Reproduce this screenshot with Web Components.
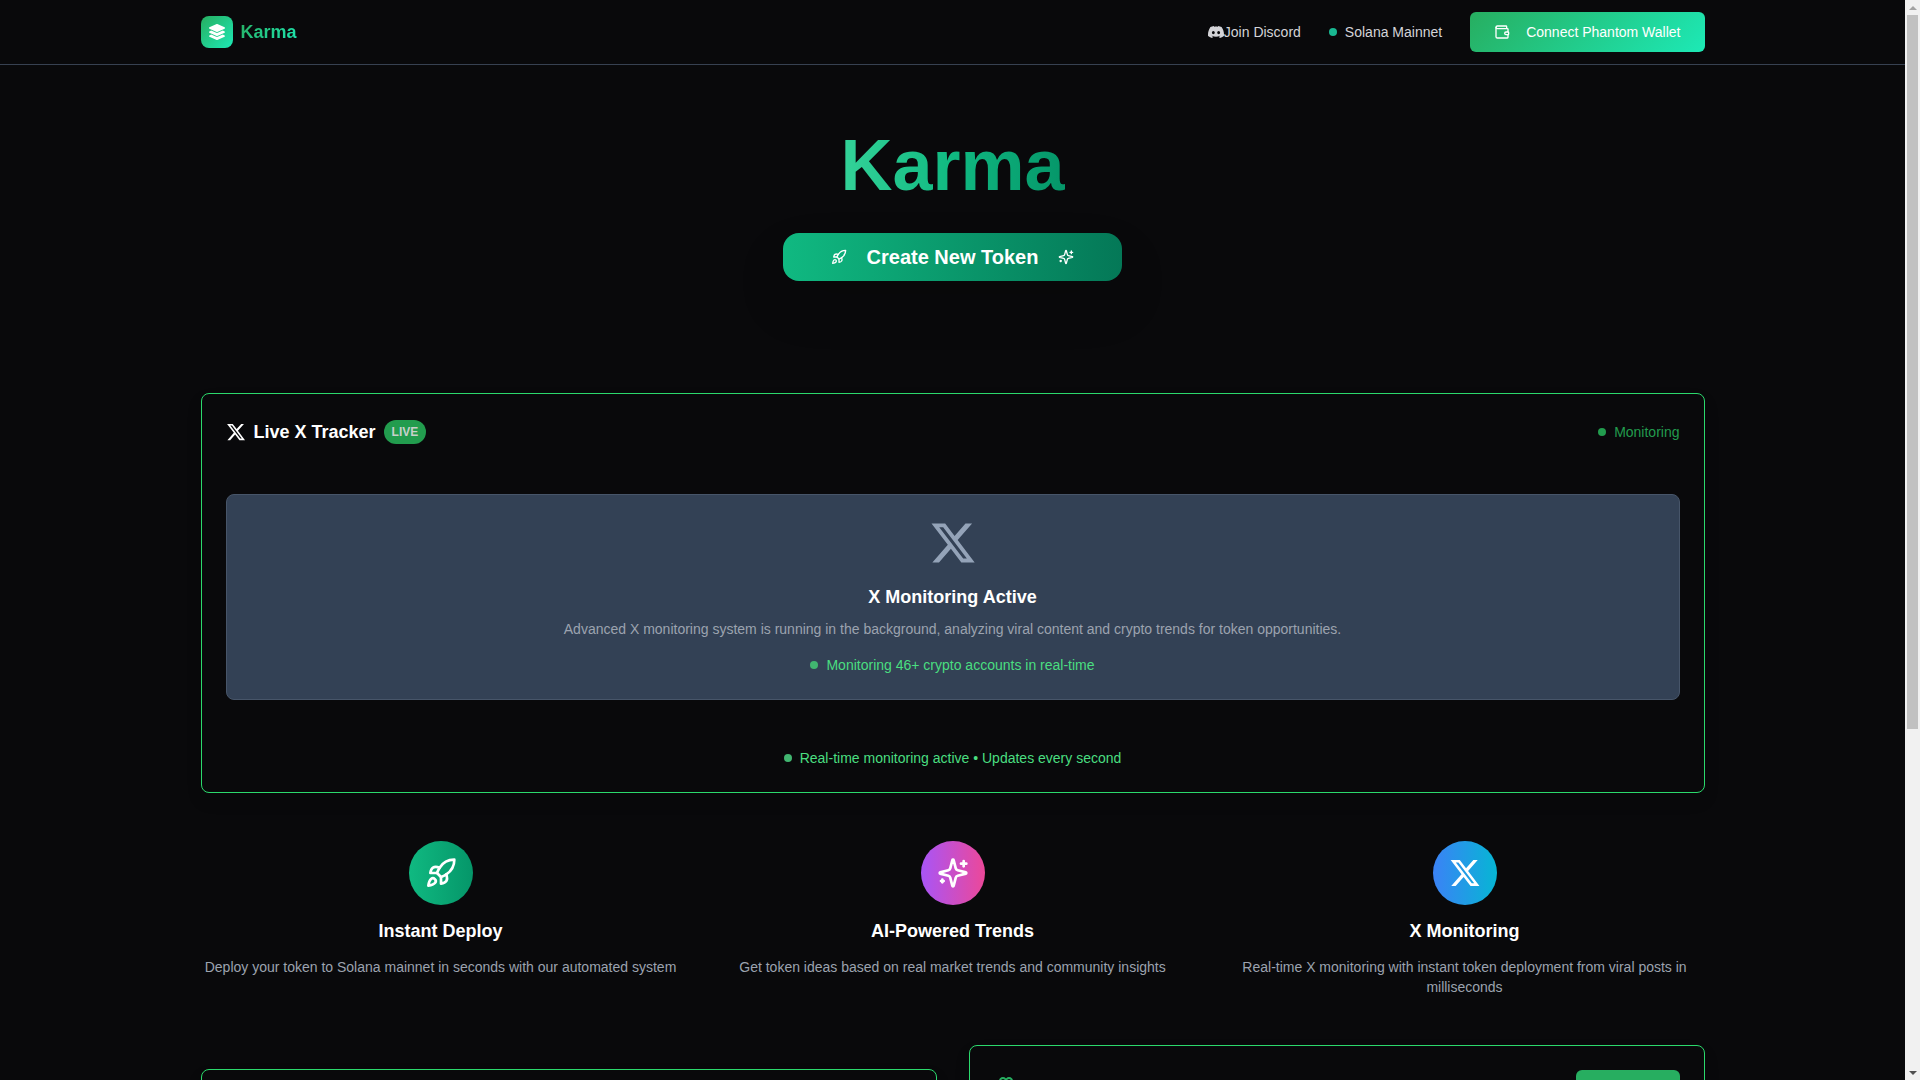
<!DOCTYPE html>
<html lang="en">
<head>
<meta charset="UTF-8">
<meta name="viewport" content="width=device-width, initial-scale=1.0">
<title>Karma</title>
<style>
  body {
    margin: 0;
    background: #09090b;
    color: #fff;
    font-family: "Liberation Sans", Arial, sans-serif;
    font-size: 14px;
    line-height: 20px;
  }
</style>
</head>
<body>
<karma-scroller>
  <karma-app></karma-app>
</karma-scroller>

<script>
// Icon.js
const stroked = (paths) => ({ viewBox: "0 0 24 24", stroke: true, paths });
const filled = (viewBox, path) => ({ viewBox, stroke: false, paths: [path] });

const ICONS = {
  layers: filled("0 0 512 512", "M12.41 148.02l232.94 105.67c6.8 3.09 14.49 3.09 21.29 0l232.94-105.67c16.55-7.51 16.55-32.52 0-40.03L266.65 2.31a25.607 25.607 0 0 0-21.29 0L12.41 107.98c-16.55 7.51-16.55 32.53 0 40.04zm487.18 88.28l-58.09-26.33-161.64 73.27c-7.56 3.43-15.59 5.17-23.86 5.17s-16.29-1.74-23.86-5.17L70.51 209.97l-58.1 26.33c-16.55 7.5-16.55 32.5 0 40l232.94 105.59c6.8 3.08 14.49 3.08 21.29 0L499.59 276.3c16.55-7.5 16.55-32.5 0-40zm0 127.8l-57.87-26.23-161.86 73.37c-7.56 3.43-15.59 5.17-23.86 5.17s-16.29-1.74-23.86-5.17L70.29 337.87 12.41 364.1c-16.55 7.5-16.55 32.5 0 40l232.94 105.59c6.8 3.08 14.49 3.08 21.29 0L499.59 404.1c16.55-7.5 16.55-32.5 0-40z"),
  discord: filled("0 0 24 24", "M20.317 4.3698a19.7913 19.7913 0 0 0-4.8851-1.5152.0741.0741 0 0 0-.0785.0371c-.211.3753-.4447.8648-.6083 1.2495-1.8447-.2762-3.68-.2762-5.4868 0-.1636-.3933-.4058-.8742-.6177-1.2495a.077.077 0 0 0-.0785-.037 19.7363 19.7363 0 0 0-4.8852 1.515.0699.0699 0 0 0-.0321.0277C.5334 9.0458-.319 13.5799.0992 18.0578a.0824.0824 0 0 0 .0312.0561c2.0528 1.5076 4.0413 2.4228 5.9929 3.0294a.0777.0777 0 0 0 .0842-.0276c.4616-.6304.8731-1.2952 1.226-1.9942a.076.076 0 0 0-.0416-.1057c-.6528-.2476-1.2743-.5495-1.8722-.8923a.077.077 0 0 1-.0076-.1277c.1258-.0943.2517-.1923.3718-.2914a.0743.0743 0 0 1 .0776-.0105c3.9278 1.7933 8.18 1.7933 12.0614 0a.0739.0739 0 0 1 .0785.0095c.1202.099.246.1981.3728.2924a.077.077 0 0 1-.0066.1276 12.2986 12.2986 0 0 1-1.873.8914.0766.0766 0 0 0-.0407.1067c.3604.698.7719 1.3628 1.225 1.9932a.076.076 0 0 0 .0842.0286c1.961-.6067 3.9495-1.5219 6.0023-3.0294a.077.077 0 0 0 .0313-.0552c.5004-5.177-.8382-9.6739-3.5485-13.6604a.061.061 0 0 0-.0312-.0286zM8.02 15.3312c-1.1825 0-2.1569-1.0857-2.1569-2.419 0-1.3332.9555-2.4189 2.157-2.4189 1.2108 0 2.1757 1.0952 2.1568 2.419 0 1.3332-.9555 2.4189-2.1569 2.4189zm7.9748 0c-1.1825 0-2.1569-1.0857-2.1569-2.419 0-1.3332.9554-2.4189 2.1569-2.4189 1.2108 0 2.1757 1.0952 2.1568 2.419 0 1.3332-.946 2.4189-2.1568 2.4189Z"),
  x: filled("0 0 24 24", "M18.244 2.25h3.308l-7.227 8.26 8.502 11.24H16.17l-5.214-6.817L4.99 21.75H1.68l7.73-8.835L1.254 2.25H8.08l4.713 6.231zm-1.161 17.52h1.833L7.084 4.126H5.117z"),
  wallet: stroked([
    "M19 7V4a1 1 0 0 0-1-1H5a2 2 0 0 0 0 4h15a1 1 0 0 1 1 1v4h-3a2 2 0 0 0 0 4h3a1 1 0 0 0 1-1v-2a1 1 0 0 0-1-1",
    "M3 5v14a2 2 0 0 0 2 2h15a1 1 0 0 0 1-1v-4",
  ]),
  rocket: stroked([
    "M4.5 16.5c-1.5 1.26-2 5-2 5s3.74-.5 5-2c.71-.84.7-2.13-.09-2.91a2.18 2.18 0 0 0-2.91-.09z",
    "m12 15-3-3a22 22 0 0 1 2-3.95A12.88 12.88 0 0 1 22 2c0 2.72-.78 7.5-6 11a22.35 22.35 0 0 1-4 2z",
    "M9 12H4s.55-3.03 2-4c1.62-1.08 5 0 5 0",
    "M12 15v5s3.03-.55 4-2c1.08-1.62 0-5 0-5",
  ]),
  sparkles: stroked([
    "M9.937 15.5A2 2 0 0 0 8.5 14.063l-6.135-1.582a.5.5 0 0 1 0-.962L8.5 9.936A2 2 0 0 0 9.937 8.5l1.582-6.135a.5.5 0 0 1 .963 0L14.063 8.5A2 2 0 0 0 15.5 9.937l6.135 1.581a.5.5 0 0 1 0 .964L15.5 14.063a2 2 0 0 0-1.437 1.437l-1.582 6.135a.5.5 0 0 1-.963 0z",
    "M20 3v4", "M22 5h-4", "M4 17v2", "M5 18H3",
  ]),
  brain: stroked([
    "M12 5a3 3 0 1 0-5.997.125 4 4 0 0 0-2.526 5.77 4 4 0 0 0 .556 6.588A4 4 0 1 0 12 18Z",
    "M12 5a3 3 0 1 1 5.997.125 4 4 0 0 1 2.526 5.77 4 4 0 0 1-.556 6.588A4 4 0 1 1 12 18Z",
  ]),
};

class KarmaIcon extends HTMLElement {
  constructor() {
    super();
    this.attachShadow({ mode: "open" });
  }

  connectedCallback() {
    const icon = ICONS[this.getAttribute("name")];
    const size = this.getAttribute("size") || 16;
    const paint = icon.stroke
      ? `fill="none" stroke="currentColor" stroke-width="2" stroke-linecap="round" stroke-linejoin="round"`
      : `fill="currentColor"`;

    this.shadowRoot.innerHTML = `
      <style>
        :host {
          display: block;
          flex: none;
        }

        svg {
          display: block;
        }
      </style>
      <svg width="${size}" height="${size}" viewBox="${icon.viewBox}" ${paint} aria-hidden="true">
        ${icon.paths.map((d) => `<path d="${d}"/>`).join("")}
      </svg>
    `;
  }
}

customElements.define("karma-icon", KarmaIcon);

// Status.js - small dot followed by a label
class KarmaStatus extends HTMLElement {
  constructor() {
    super();
    this.attachShadow({ mode: "open" });
    this.shadowRoot.innerHTML = `
      <style>
        :host {
          display: flex;
          align-items: center;
          justify-content: center;
          gap: 8px;
        }

        i {
          width: 8px;
          height: 8px;
          border-radius: 50%;
          background: var(--dot, currentColor);
        }
      </style>
      <i></i>
      <span><slot></slot></span>
    `;
  }
}

customElements.define("karma-status", KarmaStatus);

// Header.js
class KarmaHeader extends HTMLElement {
  constructor() {
    super();
    this.attachShadow({ mode: "open" });
    this.shadowRoot.innerHTML = `
      <style>
        :host {
          display: block;
          border-bottom: 1px solid #374151;
        }

        .bar {
          display: flex;
          align-items: center;
          justify-content: space-between;
          max-width: 1504px;
          height: 64px;
          margin: 0 auto;
          padding: 0 16px;
        }

        .brand {
          display: flex;
          align-items: center;
          gap: 8px;
          text-decoration: none;
        }

        .logo {
          display: grid;
          place-items: center;
          width: 32px;
          height: 32px;
          border-radius: 8px;
          background: linear-gradient(135deg, #27ae60, #1de9b6);
          color: #fff;
        }

        .name {
          font-size: 18px;
          line-height: 28px;
          font-weight: 700;
          background: linear-gradient(135deg, #27ae60, #1de9b6);
          -webkit-background-clip: text;
          background-clip: text;
          color: transparent;
        }

        nav {
          display: flex;
          align-items: center;
          gap: 28px;
          color: #d4d4d8;
        }

        .discord {
          display: flex;
          align-items: center;
          color: inherit;
          text-decoration: none;
        }

        karma-status {
          --dot: #19b892;
        }

        button {
          display: flex;
          align-items: center;
          gap: 16px;
          height: 40px;
          padding: 0 24px;
          border: none;
          border-radius: 6px;
          background: linear-gradient(135deg, #27ae60, #1de9b6);
          color: #fff;
          font: inherit;
          cursor: pointer;
        }
      </style>
      <div class="bar">
        <a class="brand" href="#">
          <span class="logo"><karma-icon name="layers"></karma-icon></span>
          <span class="name">Karma</span>
        </a>
        <nav>
          <a class="discord" href="#discord"><karma-icon name="discord"></karma-icon>Join Discord</a>
          <karma-status>Solana Mainnet</karma-status>
          <button type="button"><karma-icon name="wallet"></karma-icon>Connect Phantom Wallet</button>
        </nav>
      </div>
    `;
  }
}

customElements.define("karma-header", KarmaHeader);

// Hero.js
class KarmaHero extends HTMLElement {
  constructor() {
    super();
    this.attachShadow({ mode: "open" });
    this.shadowRoot.innerHTML = `
      <style>
        :host {
          display: flex;
          flex-direction: column;
          align-items: center;
          gap: 32px;
          padding: 64px 0;
        }

        h1 {
          margin: 0;
          font-size: 72px;
          line-height: 72px;
          font-weight: 700;
          background: linear-gradient(90deg, #34d399, #10b981, #059669);
          -webkit-background-clip: text;
          background-clip: text;
          color: transparent;
        }

        button {
          display: flex;
          align-items: center;
          gap: 20px;
          height: 48px;
          padding: 0 48px;
          border: none;
          border-radius: 16px;
          background: linear-gradient(90deg, #10b981, #047857);
          box-shadow: 0 24px 48px rgba(0, 0, 0, 0.15);
          color: #fff;
          font: inherit;
          font-size: 20px;
          font-weight: 700;
          cursor: pointer;
        }
      </style>
      <h1>Karma</h1>
      <button type="button">
        <karma-icon name="rocket"></karma-icon>
        Create New Token
        <karma-icon name="sparkles"></karma-icon>
      </button>
    `;
  }
}

customElements.define("karma-hero", KarmaHero);

// Card.js - outlined panel used by every section
class KarmaCard extends HTMLElement {
  constructor() {
    super();
    this.attachShadow({ mode: "open" });
    this.shadowRoot.innerHTML = `
      <style>
        :host {
          display: block;
          padding: 24px;
          border: 1px solid #2bd96c;
          border-radius: 8px;
          box-shadow: 0 8px 16px rgba(0, 0, 0, 0.1);
        }
      </style>
      <slot></slot>
    `;
  }
}

customElements.define("karma-card", KarmaCard);

// Tracker.js
class KarmaTracker extends HTMLElement {
  constructor() {
    super();
    this.attachShadow({ mode: "open" });
    this.shadowRoot.innerHTML = `
      <style>
        :host {
          display: block;
        }

        header {
          display: flex;
          align-items: center;
          justify-content: space-between;
          height: 28px;
        }

        h2, h3 {
          margin: 0;
          font-size: 18px;
          line-height: 28px;
          font-weight: 700;
        }

        h2 {
          display: flex;
          align-items: center;
          gap: 8px;
        }

        .badge {
          padding: 0 8px;
          border-radius: 12px;
          background: #229c4e;
          color: #c8d0cb;
          font-size: 12px;
          line-height: 24px;
        }

        header karma-status {
          color: #229c4e;
        }

        .panel {
          display: flex;
          flex-direction: column;
          align-items: center;
          margin: 48px 0;
          padding: 24px;
          border: 1px solid #475569;
          border-radius: 8px;
          background: #334155;
          text-align: center;
        }

        .panel > karma-icon {
          margin-bottom: 16px;
          color: #94a3b8;
        }

        p {
          margin: 8px 0 16px;
          color: #9ca3af;
        }

        .panel karma-status,
        footer karma-status {
          color: #4ade80;
          --dot: #41b570;
        }
      </style>
      <karma-card>
        <header>
          <h2><karma-icon name="x" size="20"></karma-icon>Live X Tracker<span class="badge">LIVE</span></h2>
          <karma-status>Monitoring</karma-status>
        </header>
        <div class="panel">
          <karma-icon name="x" size="48"></karma-icon>
          <h3>X Monitoring Active</h3>
          <p>Advanced X monitoring system is running in the background, analyzing viral content and crypto trends for token opportunities.</p>
          <karma-status>Monitoring 46+ crypto accounts in real-time</karma-status>
        </div>
        <footer>
          <karma-status>Real-time monitoring active • Updates every second</karma-status>
        </footer>
      </karma-card>
    `;
  }
}

customElements.define("karma-tracker", KarmaTracker);

// Feature.js
class KarmaFeature extends HTMLElement {
  constructor() {
    super();
    this.attachShadow({ mode: "open" });
  }

  connectedCallback() {
    const icon = this.getAttribute("icon");
    const title = this.getAttribute("heading");

    this.shadowRoot.innerHTML = `
      <style>
        :host {
          display: flex;
          flex-direction: column;
          align-items: center;
          gap: 12px;
          text-align: center;
        }

        .disc {
          display: grid;
          place-items: center;
          width: 64px;
          height: 64px;
          border-radius: 50%;
          background: linear-gradient(90deg, var(--from), var(--to));
        }

        h3 {
          margin: 0;
          font-size: 18px;
          line-height: 28px;
          font-weight: 700;
        }

        p {
          margin: 0;
          color: #9ca3af;
        }
      </style>
      <div class="disc"><karma-icon name="${icon}" size="32"></karma-icon></div>
      <h3>${title}</h3>
      <p><slot></slot></p>
    `;
  }
}

customElements.define("karma-feature", KarmaFeature);

// App.js
class KarmaApp extends HTMLElement {
  constructor() {
    super();
    this.attachShadow({ mode: "open" });
    this.shadowRoot.innerHTML = `
      <style>
        :host {
          display: block;
        }

        main {
          display: flex;
          flex-direction: column;
          gap: 48px;
          max-width: 1504px;
          margin: 0 auto;
          padding: 0 16px 48px;
        }

        .features {
          display: grid;
          grid-template-columns: repeat(3, 1fr);
          gap: 32px;
        }

        .deploy {
          --from: #10b981;
          --to: #059669;
        }

        .trends {
          --from: #a855f7;
          --to: #ec4899;
        }

        .monitor {
          --from: #3b82f6;
          --to: #06b6d4;
        }

        .tools {
          display: grid;
          grid-template-columns: repeat(2, 1fr);
          gap: 32px;
          min-height: 496px;
        }

        .launch {
          margin-top: 24px;
        }

        .ideas-head {
          display: flex;
          align-items: center;
          justify-content: space-between;
          color: #27ae60;
        }

        .ideas-head button {
          width: 104px;
          height: 36px;
          border: none;
          border-radius: 6px;
          background: #27ae60;
          cursor: pointer;
        }
      </style>
      <karma-header></karma-header>
      <main>
        <karma-hero></karma-hero>
        <karma-tracker></karma-tracker>
        <section class="features">
          <karma-feature class="deploy" icon="rocket" heading="Instant Deploy">Deploy your token to Solana mainnet in seconds with our automated system</karma-feature>
          <karma-feature class="trends" icon="sparkles" heading="AI-Powered Trends">Get token ideas based on real market trends and community insights</karma-feature>
          <karma-feature class="monitor" icon="x" heading="X Monitoring">Real-time X monitoring with instant token deployment from viral posts in milliseconds</karma-feature>
        </section>
        <section class="tools">
          <karma-card class="launch"></karma-card>
          <karma-card>
            <div class="ideas-head">
              <karma-icon name="brain" size="24"></karma-icon>
              <button type="button" aria-label="Refresh"></button>
            </div>
          </karma-card>
        </section>
      </main>
    `;
  }
}

customElements.define("karma-app", KarmaApp);

// Scroller.js - page viewport with its own scrollbar on the right
class KarmaScroller extends HTMLElement {
  constructor() {
    super();
    this.attachShadow({ mode: "open" });
    this.shadowRoot.innerHTML = `
      <style>
        :host {
          display: grid;
          grid-template-columns: 1fr 15px;
          height: 100vh;
        }

        .view {
          min-width: 0;
          overflow-y: auto;
          scrollbar-width: none;
        }

        .bar {
          display: grid;
          grid-template-rows: 15px 1fr 15px;
          min-height: 0;
          background: #f1f1f1;
        }

        button {
          display: grid;
          place-items: center;
          padding: 0;
          border: none;
          background: none;
          color: #505050;
        }

        button:disabled {
          color: #a3a3a3;
        }

        .track {
          min-height: 0;
          padding: 0 2px;
        }

        .thumb {
          background: #c1c1c1;
        }
      </style>
      <div class="view"><slot></slot></div>
      <div class="bar">
        <button type="button" class="up" aria-label="Scroll up" disabled>
          <svg width="8" height="4" viewBox="0 0 8 4" fill="currentColor"><path d="M0 4 4 0l4 4z"/></svg>
        </button>
        <div class="track"><div class="thumb"></div></div>
        <button type="button" class="down" aria-label="Scroll down">
          <svg width="8" height="4" viewBox="0 0 8 4" fill="currentColor"><path d="M0 0h8L4 4z"/></svg>
        </button>
      </div>
    `;
  }

  connectedCallback() {
    const find = (selector) => this.shadowRoot.querySelector(selector);
    this.view = find(".view");
    this.track = find(".track");
    this.thumb = find(".thumb");
    this.up = find(".up");
    this.down = find(".down");

    this.view.addEventListener("scroll", () => this.update());
    this.up.addEventListener("click", () => this.view.scrollBy(0, -40));
    this.down.addEventListener("click", () => this.view.scrollBy(0, 40));

    const observer = new ResizeObserver(() => this.update());
    observer.observe(this.view);
    observer.observe(this.firstElementChild);
  }

  update() {
    const { scrollTop, scrollHeight, clientHeight } = this.view;
    const ratio = this.track.clientHeight / scrollHeight;
    this.thumb.style.height = `${Math.round(clientHeight * ratio)}px`;
    this.thumb.style.transform = `translateY(${Math.round(scrollTop * ratio)}px)`;
    this.up.disabled = scrollTop <= 0;
    this.down.disabled = scrollTop + clientHeight >= scrollHeight;
  }
}

customElements.define("karma-scroller", KarmaScroller);
</script>
</body>
</html>
